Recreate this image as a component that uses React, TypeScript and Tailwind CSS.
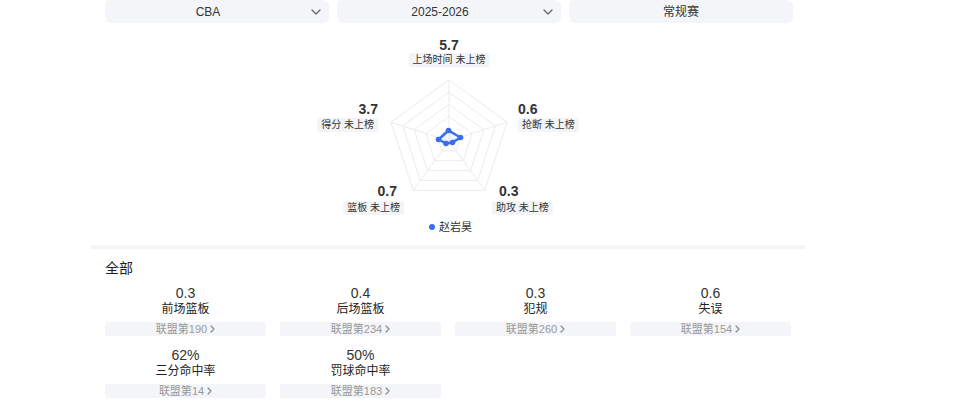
import React from 'react';

const font = { fontFamily: '"Liberation Sans", "Noto Sans CJK SC", sans-serif' };

interface Stat {
  value: string;
  label: string;
  rank: number;
}

const stats: Stat[] = [
  { value: '0.3', label: '前场篮板', rank: 190 },
  { value: '0.4', label: '后场篮板', rank: 234 },
  { value: '0.3', label: '犯规', rank: 260 },
  { value: '0.6', label: '失误', rank: 154 },
  { value: '62%', label: '三分命中率', rank: 14 },
  { value: '50%', label: '罚球命中率', rank: 183 },
];

// radar geometry, in radar-box coordinates
const CX = 358;
const CY = 118;
const R = 61;

const vertex = (i: number, r: number) => {
  const a = -Math.PI / 2 + (i * 2 * Math.PI) / 5;
  return [CX + r * Math.cos(a), CY + r * Math.sin(a)];
};

const ring = (r: number) =>
  [0, 1, 2, 3, 4].map((i) => vertex(i, r).map((n) => n.toFixed(1)).join(',')).join(' ');

const dataPoints = [
  [357.5, 107.5],
  [369.5, 114.5],
  [361.5, 119.5],
  [355, 120.5],
  [347.5, 116.5],
];

function Chevron() {
  return (
    <svg width="10" height="6" viewBox="0 0 10 6" fill="none">
      <path d="M1 1l4 4 4-4" stroke="#666" strokeWidth="1.3" strokeLinecap="round" strokeLinejoin="round" />
    </svg>
  );
}

function Select({ label, arrow = true }: { label: string; arrow?: boolean }) {
  return (
    <div className="h-[23px] rounded-[6px] bg-[#f4f5f8] flex items-center text-[12px] text-[#333]">
      <span className="flex-1 text-center">{label}</span>
      {arrow && (
        <span className="pr-[8px] flex items-center">
          <Chevron />
        </span>
      )}
    </div>
  );
}

function Pill({ text }: { text: string }) {
  return (
    <div className="h-[14px] px-[4px] rounded-[3px] bg-[#f3f4f7] text-[10px] leading-[14px] text-[#333] whitespace-nowrap">
      {text}
    </div>
  );
}

function Radar() {
  return (
    <div className="relative h-[222px]">
      <svg className="absolute inset-0" width="714" height="222">
        {[1, 2, 3, 4, 5].map((k) => (
          <polygon key={k} points={ring((R * k) / 5)} fill="none" stroke="#ececec" strokeWidth="1" />
        ))}
        {[0, 1, 2, 3, 4].map((i) => {
          const [x, y] = vertex(i, R);
          return <line key={i} x1={CX} y1={CY} x2={x} y2={y} stroke="#ececec" strokeWidth="1" />;
        })}
        <polygon
          points={dataPoints.map((p) => p.join(',')).join(' ')}
          fill="rgba(58,109,240,0.08)"
          stroke="#3a6df0"
          strokeWidth="2.5"
          strokeLinejoin="round"
        />
        {dataPoints.map(([x, y], i) => (
          <circle key={i} cx={x} cy={y} r="2.8" fill="#3a6df0" />
        ))}
      </svg>

      {/* top */}
      <div className="absolute top-[14px] left-[358px] -translate-x-1/2 flex flex-col items-center">
        <div className="text-[14px] leading-[16px] font-bold text-[#333]">5.7</div>
        <Pill text="上场时间 未上榜" />
      </div>
      {/* left */}
      <div className="absolute top-[78px] right-[427px] flex flex-col items-end">
        <div className="text-[14px] leading-[16px] font-bold text-[#333]">3.7</div>
        <div className="mt-[1px]">
          <Pill text="得分 未上榜" />
        </div>
      </div>
      {/* right */}
      <div className="absolute top-[78px] left-[427px] flex flex-col items-start">
        <div className="text-[14px] leading-[16px] font-bold text-[#333]">0.6</div>
        <div className="mt-[1px]">
          <Pill text="抢断 未上榜" />
        </div>
      </div>
      {/* bottom left */}
      <div className="absolute top-[160px] right-[401px] flex flex-col items-end">
        <div className="text-[14px] leading-[16px] font-bold text-[#333] pr-[7px]">0.7</div>
        <div className="mt-[2px]">
          <Pill text="篮板 未上榜" />
        </div>
      </div>
      {/* bottom right */}
      <div className="absolute top-[160px] left-[401px] flex flex-col items-start">
        <div className="text-[14px] leading-[16px] font-bold text-[#333] pl-[7px]">0.3</div>
        <div className="mt-[2px]">
          <Pill text="助攻 未上榜" />
        </div>
      </div>

      {/* legend */}
      <div className="absolute top-[197px] left-[338px] flex items-center gap-[4px] text-[11px] leading-[14px] text-[#333]">
        <span className="w-[6px] h-[6px] rounded-full bg-[#3a6df0]" />
        赵岩昊
      </div>
    </div>
  );
}

export default function App() {
  return (
    <div className="w-[960px] h-[408px] bg-white overflow-hidden" style={font}>
      <div className="ml-[91px] w-[714px]">
        <div className="pl-[14px] pr-[12px] grid grid-cols-3 gap-[8px]">
          <Select label="CBA" />
          <Select label="2025-2026" />
          <Select label="常规赛" arrow={false} />
        </div>

        <Radar />

        <div className="h-[4px] bg-[#f5f5f7]" />

        <div className="px-[14px] pt-[9px]">
          <div className="text-[14px] leading-[20px] text-[#222]">全部</div>
          <div className="mt-[7px] grid grid-cols-[repeat(4,161px)] gap-x-[14px] gap-y-[11px]">
            {stats.map((s) => (
              <div key={s.label} className="flex flex-col items-center">
                <div className="text-[14px] leading-[16px] text-[#333]">{s.value}</div>
                <div className="text-[12px] leading-[16px] text-[#222]">{s.label}</div>
                <div className="mt-[5px] w-full h-[14px] rounded-[3px] bg-[#f4f5f8] flex items-center justify-center gap-[3px] text-[11px] text-[#999]">
                  联盟第{s.rank}
                  <svg width="5" height="8" viewBox="0 0 5 8" fill="none">
                    <path d="M1 1l3 3-3 3" stroke="#888" strokeWidth="1.2" strokeLinecap="round" strokeLinejoin="round" />
                  </svg>
                </div>
              </div>
            ))}
          </div>
        </div>
      </div>
    </div>
  );
}
